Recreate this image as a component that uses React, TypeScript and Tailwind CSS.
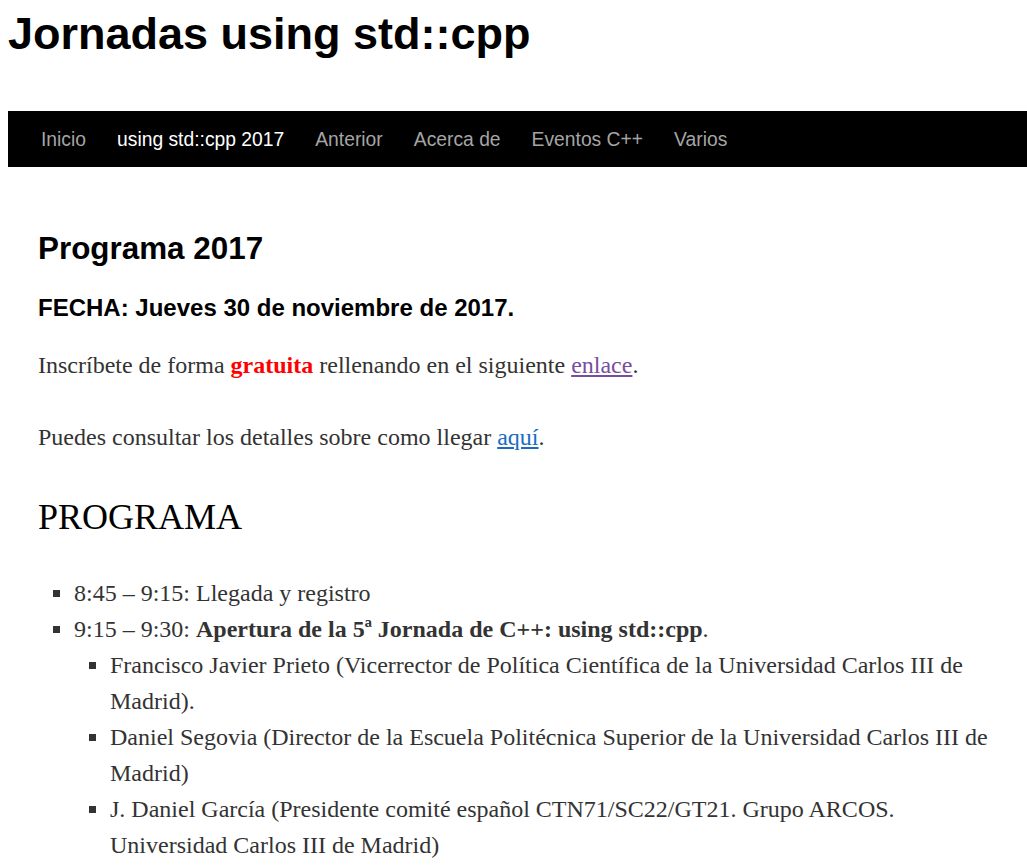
import React from 'react';

const navItems = [
    { label: 'Inicio', active: false },
    { label: 'using std::cpp 2017', active: true },
    { label: 'Anterior', active: false },
    { label: 'Acerca de', active: false },
    { label: 'Eventos C++', active: false },
    { label: 'Varios', active: false },
];

const App: React.FC = () => {
    return (
        <div className="min-h-screen bg-white pl-2 font-['Liberation_Sans',Arial,sans-serif]">
            <h1 className="pt-2 text-[45px] leading-[52px] font-bold text-black">Jornadas using std::cpp</h1>

            {/* Main navigation */}
            <nav className="mt-[51px] flex h-14 items-center gap-[31px] bg-black pl-[33px] pt-[2px]">
                {navItems.map((item) => (
                    <a
                        key={item.label}
                        href="#"
                        className={`text-[19.3px] leading-6 ${item.active ? 'text-white' : 'text-[#a5a5a5]'}`}
                    >
                        {item.label}
                    </a>
                ))}
            </nav>

            <main className="pl-[30px] pr-[30px] pt-[62px]">
                <h2 className="text-[31.4px] leading-10 font-bold text-black">Programa 2017</h2>
                <h3 className="mt-[21px] text-[24px] leading-9 font-bold text-black">FECHA: Jueves 30 de noviembre de 2017.</h3>

                <div className="mt-[21px] font-['Liberation_Serif','Times_New_Roman',serif] text-[24px] leading-9 text-[#333]">
                    <p>
                        Inscríbete de forma <strong className="text-[#ff0000]">gratuita</strong> rellenando en el siguiente{' '}
                        <a href="#" className="text-[#774e9f] underline">enlace</a>.
                    </p>
                    <p className="mt-9">
                        Puedes consultar los detalles sobre como llegar{' '}
                        <a href="#" className="text-[#1a6cc2] underline">aquí</a>.
                    </p>

                    <h2 className="mt-[41px] text-[36px] leading-[43px] text-black">PROGRAMA</h2>

                    <ul className="mt-9 list-[square] pl-9">
                        <li>8:45 – 9:15: Llegada y registro</li>
                        <li>
                            9:15 – 9:30: <strong>Apertura de la 5ª Jornada de C++: using std::cpp</strong>.
                            <ul className="list-[square] pl-9">
                                <li>Francisco Javier Prieto (Vicerrector de Política Científica de la Universidad Carlos III de Madrid).</li>
                                <li>Daniel Segovia (Director de la Escuela Politécnica Superior de la Universidad Carlos III de Madrid)</li>
                                <li>J. Daniel García (Presidente comité español CTN71/SC22/GT21. Grupo ARCOS. Universidad Carlos III de Madrid)</li>
                            </ul>
                        </li>
                    </ul>
                </div>
            </main>
        </div>
    );
};

export default App;
